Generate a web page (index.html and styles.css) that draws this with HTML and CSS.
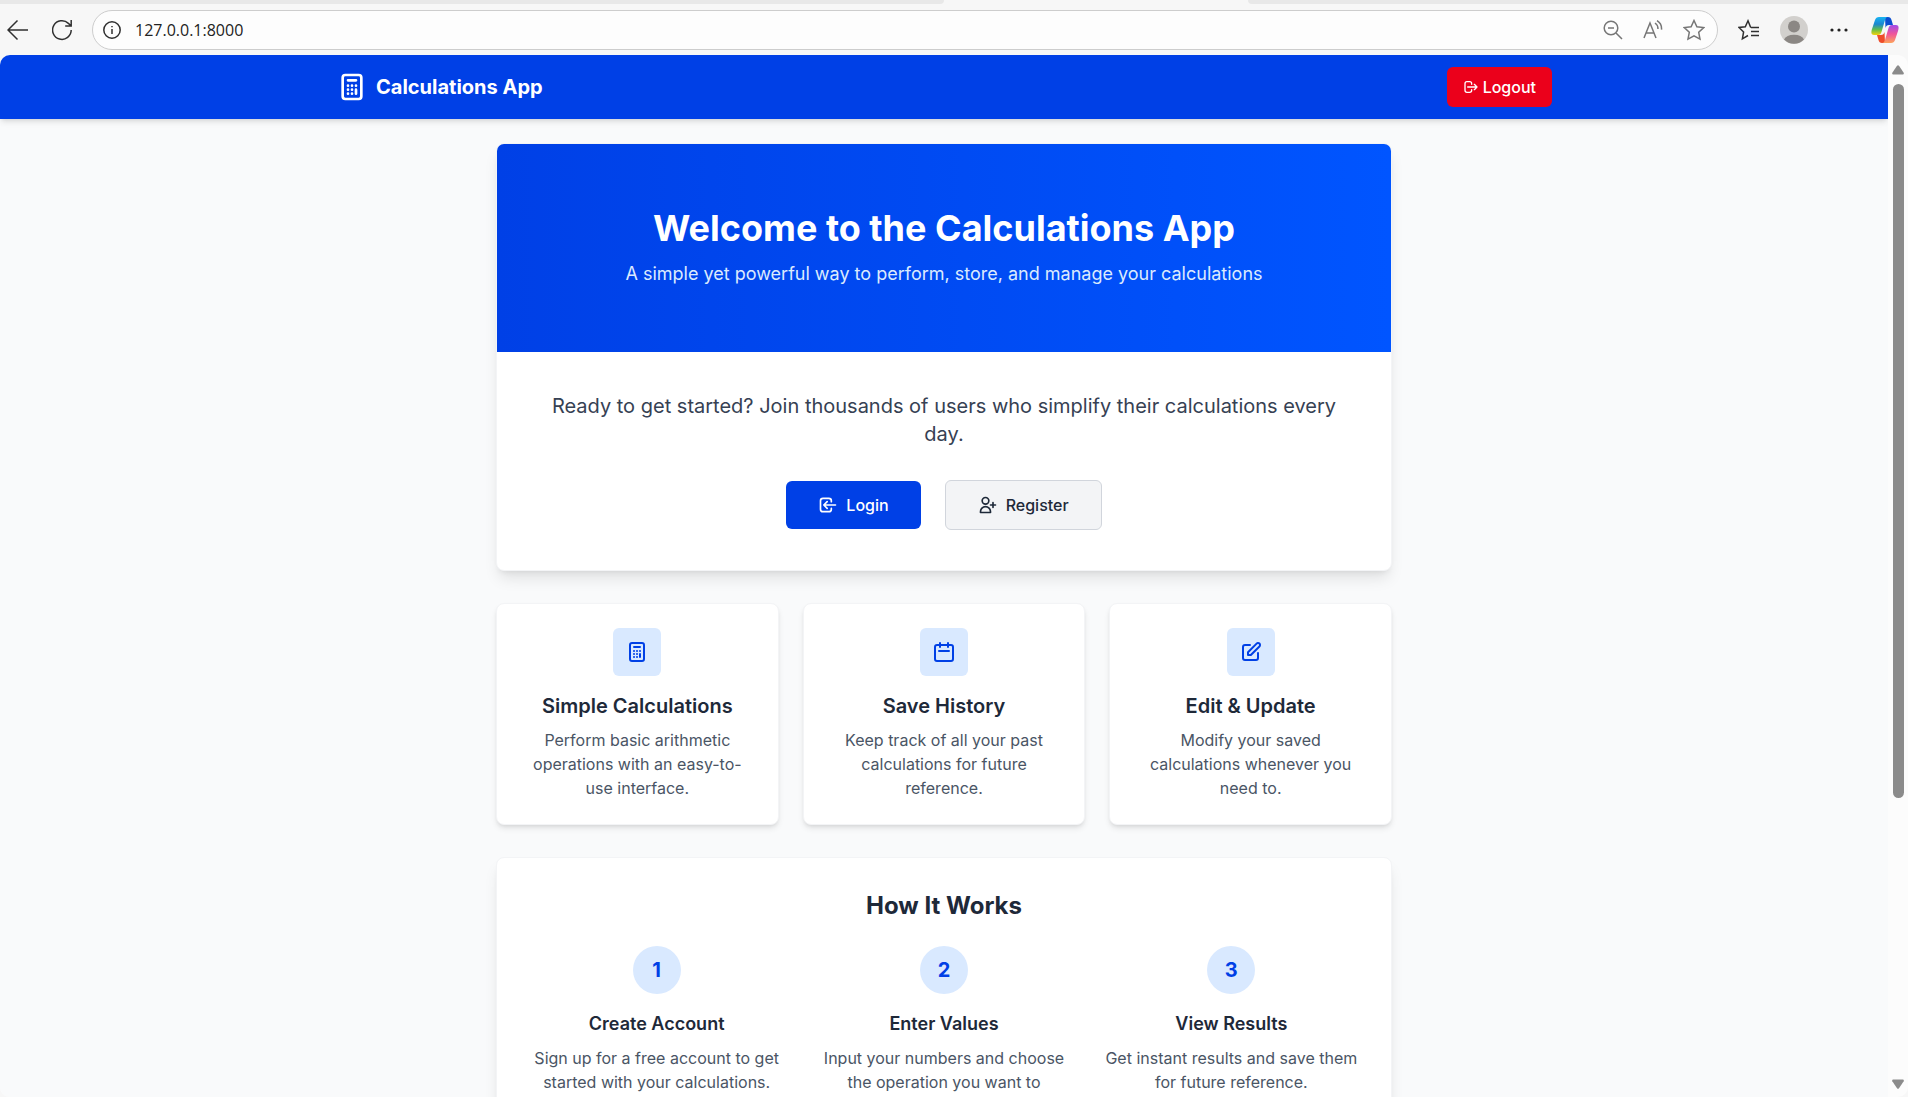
FILE: index.html
```html
<!DOCTYPE html>
<html lang="en">
<head>
<meta charset="utf-8">
<title>Calculations App</title>
<link rel="stylesheet" href="styles.css">
</head>
<body>
<svg class="sprite" aria-hidden="true">
  <symbol id="calc" viewBox="0 0 24 24"><path class="line" d="M9 7h6m0 10v-3m-3 3h.01M9 17h.01M9 14h.01M12 14h.01M15 11h.01M12 11h.01M9 11h.01M7 21h10a2 2 0 002-2V5a2 2 0 00-2-2H7a2 2 0 00-2 2v14a2 2 0 002 2z"/></symbol>
</svg>
<div class="browser">
  <div class="tabs"><span class="tab-edge left"></span><span class="active-tab"></span><span class="tab-edge right"></span></div>
  <div class="toolbar">
    <div class="nav">
      <button class="tool" aria-label="Back"><svg width="22" height="22" viewBox="0 0 22 22"><path d="M21 11H1.500M10.500 1.500L1 11l9.500 9.500"/></svg></button>
      <button class="tool" aria-label="Refresh"><svg width="20" height="22" viewBox="0 0 20 22"><path d="M19.200 11a9.300 9.300 0 1 1-2.800-6.600l2.300 2.100M19.200 1v6h-6"/></svg></button>
    </div>
    <div class="address">
      <svg width="18" height="18" viewBox="0 0 18 18"><circle cx="9" cy="9" r="8.200"/><path d="M9 8v5M9 5v1.300"/></svg>
      <input class="url" type="text" value="127.0.0.1:8000" aria-label="Address">
      <div class="address-actions">
        <svg class="soft" width="20" height="20" viewBox="0 0 20 20"><circle cx="8" cy="8" r="6.800"/><path d="M13 13l6 6M5 8h6"/></svg>
        <svg class="soft" width="20" height="20" viewBox="0 0 20 20"><path d="M1 18L7 3l6 15M3 13h8M12 3q3 2 3 6M14 .6q5 3 4.500 9"/></svg>
        <svg class="soft" width="22" height="22" viewBox="0 0 22 22"><path d="M11 1.500l2.900 6.200 6.800.9-5 4.700 1.300 6.900-6-3.300-6 3.300 1.300-6.900-5-4.700 6.800-.9z"/></svg>
      </div>
    </div>
    <button class="tool" aria-label="Favorites"><svg width="22" height="22" viewBox="0 0 22 22"><path d="M13 8h-0.500L10 1.800 7.300 7.700l-6.300.8 4.600 4.500-1.200 6.800L10 16.500M13 8.500h8M13 12.500h8M13 16.500h8"/></svg></button>
    <button class="tool" aria-label="Profile"><svg class="avatar" width="28" height="28" viewBox="0 0 28 28"><circle cx="14" cy="14" r="14" fill="#d2d0cd"/><circle cx="14" cy="10.500" r="6" fill="#8b8784"/><path fill="#8b8784" d="M4 23.500a10.500 7 0 0 1 20 0A14 14 0 0 1 4 23.500z"/></svg></button>
    <button class="tool" aria-label="More"><svg class="dots" width="22" height="18" viewBox="0 0 22 18"><circle cx="4" cy="9" r="1.600"/><circle cx="11" cy="9" r="1.600"/><circle cx="18" cy="9" r="1.600"/></svg></button>
    <button class="tool" aria-label="Copilot"><svg class="copilot" width="30" height="28" viewBox="-1 0 30 28">
      <defs>
        <linearGradient id="ga" x1="0" y1="0" x2="0" y2="1"><stop offset="0" stop-color="#18b4f2"/><stop offset=".4" stop-color="#1b86d0"/><stop offset=".7" stop-color="#63bd4b"/><stop offset="1" stop-color="#f5d20c"/></linearGradient>
        <linearGradient id="gb" x1="0" y1="0" x2="0" y2="1"><stop offset="0" stop-color="#a04be8"/><stop offset=".5" stop-color="#f0559a"/><stop offset="1" stop-color="#fda35b"/></linearGradient>
      </defs>
      <path fill="#0b4fd0" d="M14 1h3c2 0 3 1 3.500 3l1.500 5h-4c-2 0-3 1-3.500 3z"/>
      <path fill="#ee4c2b" d="M14 27h-3c-2 0-3-1-3.500-3L6 19h4c2 0 3-1 3.500-3z"/>
      <path fill="url(#ga)" d="M8 1h9c-2 0-2.500 1.500-3 3l-3.500 12c-.7 2-1.500 3-3.500 3H3c-3 0-3-3-2-6L4 4c.7-2 2-3 4-3z"/>
      <path fill="url(#gb)" d="M20 27h-9c2 0 2.500-1.500 3-3l3.500-12c.7-2 1.500-3 3.500-3h4c3 0 3 3 2 6l-3 9c-.7 2-2 3-4 3z"/>
    </svg></button>
  </div>
  <div class="window">
    <div class="page">
      <header class="site-header">
        <div class="header-inner">
          <a class="brand" href="#"><svg width="32" height="32" viewBox="0 0 24 24"><use href="#calc"/></svg>Calculations App</a>
          <button class="logout"><svg width="16" height="16" viewBox="0 0 24 24"><path class="line" d="M17 16l4-4m0 0l-4-4m4 4H7m6 4v1a3 3 0 01-3 3H6a3 3 0 01-3-3V7a3 3 0 013-3h4a3 3 0 013 3v1"/></svg>Logout</button>
        </div>
      </header>
      <main class="content">
        <section class="card hero">
          <div class="banner">
            <h1>Welcome to the Calculations App</h1>
            <p>A simple yet powerful way to perform, store, and manage your calculations</p>
          </div>
          <div class="start">
            <p>Ready to get started? Join thousands of users who simplify their calculations every day.</p>
            <div class="actions">
              <a class="btn primary" href="#"><svg width="20" height="20" viewBox="0 0 24 24"><path class="line" d="M11 16l-4-4m0 0l4-4m-4 4h14m-5 4v1a3 3 0 01-3 3H6a3 3 0 01-3-3V7a3 3 0 013-3h7a3 3 0 013 3v1"/></svg>Login</a>
              <a class="btn secondary" href="#"><svg width="20" height="20" viewBox="0 0 24 24"><path class="line" d="M18 9v3m0 0v3m0-3h3m-3 0h-3m-2-5a4 4 0 11-8 0 4 4 0 018 0zM3 20a6 6 0 0112 0v1H3v-1z"/></svg>Register</a>
            </div>
          </div>
        </section>
        <section class="features">
          <article class="card feature">
            <span class="tile"><svg width="24" height="24" viewBox="0 0 24 24"><use href="#calc"/></svg></span>
            <h2>Simple Calculations</h2>
            <p>Perform basic arithmetic operations with an easy-to-use interface.</p>
          </article>
          <article class="card feature">
            <span class="tile"><svg width="24" height="24" viewBox="0 0 24 24"><path class="line" d="M8 7V3m8 4V3m-9 8h10M5 21h14a2 2 0 002-2V7a2 2 0 00-2-2H5a2 2 0 00-2 2v12a2 2 0 002 2z"/></svg></span>
            <h2>Save History</h2>
            <p>Keep track of all your past calculations for future reference.</p>
          </article>
          <article class="card feature">
            <span class="tile"><svg width="24" height="24" viewBox="0 0 24 24"><path class="line" d="M11 5H6a2 2 0 00-2 2v11a2 2 0 002 2h11a2 2 0 002-2v-5m-1.414-9.414a2 2 0 112.828 2.828L11.828 15H9v-2.828l8.586-8.586z"/></svg></span>
            <h2>Edit &amp; Update</h2>
            <p>Modify your saved calculations whenever you need to.</p>
          </article>
        </section>
        <section class="card how">
          <h2>How It Works</h2>
          <ol class="steps">
            <li><span class="number">1</span><h3>Create Account</h3><p>Sign up for a free account to get started with your calculations.</p></li>
            <li><span class="number">2</span><h3>Enter Values</h3><p>Input your numbers and choose the operation you want to perform.</p></li>
            <li><span class="number">3</span><h3>View Results</h3><p>Get instant results and save them for future reference.</p></li>
          </ol>
        </section>
      </main>
    </div>
    <div class="scrollbar" aria-hidden="true">
      <svg width="12" height="10" viewBox="0 0 12 10"><path d="M5 .8q1-1.300 2 0l4.700 7q.6 1.700-1 1.700H1.300q-1.600 0-1-1.700z"/></svg>
      <div class="track"><div class="thumb"></div><div class="rest"></div></div>
      <svg width="12" height="10" viewBox="0 0 12 10"><path d="M5 9.200q1 1.300 2 0l4.700-7q.6-1.700-1-1.700H1.300q-1.600 0-1 1.700z"/></svg>
    </div>
  </div>
</div>
</body>
</html>
```
FILE: styles.css
```css
* { box-sizing: border-box; }
body, h1, h2, h3, p, ol { margin: 0; padding: 0; }
body {
  font-family: Inter, "Liberation Sans", sans-serif;
  font-size: 16px;
  line-height: 24px;
  color: #1e2939;
}
button, input { font: inherit; border: 0; padding: 0; background: none; }
a { color: inherit; text-decoration: none; }
svg { display: block; flex: none; }
.sprite { display: none; }
.line { fill: none; stroke: currentColor; stroke-width: 2; stroke-linecap: round; stroke-linejoin: round; }

/* Browser frame */
.browser { display: flex; flex-direction: column; height: 100vh; overflow: hidden; background: #f7f7f7; }
.tabs { flex: none; display: grid; grid-template-columns: 10fr 304px 7fr; height: 4px; }
.tab-edge { background: #e8e8e8; }
.tab-edge.left { border-bottom-right-radius: 8px; }
.tab-edge.right { border-bottom-left-radius: 8px; }
.toolbar { flex: none; display: flex; align-items: center; height: 51px; padding: 0 8px 0 7px; gap: 20px; }
.nav { display: flex; align-items: center; gap: 23px; }
.tool { display: flex; }
.toolbar svg { fill: none; stroke: #303030; stroke-width: 1.5; }
.toolbar .soft { stroke: #767676; }
.toolbar .avatar, .toolbar .copilot { stroke: none; }
.toolbar .dots { fill: #222; stroke: none; }
.address {
  flex: 1; min-width: 0; display: flex; align-items: center; gap: 14px;
  height: 40px; padding: 0 12px 0 10px;
  border: 1px solid #cdcdcd; border-radius: 20px; background: #fdfdfd;
}
.address-actions { display: flex; align-items: center; gap: 20px; }
.url { flex: 1; min-width: 0; font-family: "Open Sans", sans-serif; font-size: 16px; color: #222; }
.window { flex: 1; min-height: 0; display: flex; border-radius: 10px; overflow: hidden; background: #fcfcfc; }
.page { flex: 1; min-width: 0; overflow: hidden; background: #f9fafb; }
.scrollbar { flex: none; width: 20px; display: flex; flex-direction: column; align-items: center; gap: 9px; padding: 10px 0 8px; }
.scrollbar svg { fill: #8b8b8b; }
.track { flex: 1; display: flex; flex-direction: column; }
.thumb { flex: 21; width: 11px; border-radius: 6px; background: #8b8b8b; }
.rest { flex: 8; }

/* Site header */
.site-header { position: relative; background: #0040e6; box-shadow: 0 4px 6px -1px rgba(0,0,0,.1), 0 2px 4px -2px rgba(0,0,0,.1); }
.header-inner { display: flex; align-items: center; justify-content: space-between; max-width: 1280px; height: 64px; margin: 0 auto; padding: 0 32px; }
.brand { display: flex; align-items: center; gap: 8px; color: #fff; font-size: 20px; line-height: 28px; font-weight: 700; }
.logout { display: flex; align-items: center; gap: 4px; height: 40px; padding: 0 16px; border-radius: 6px; background: #eb001b; color: #fff; font-weight: 500; }

/* Content */
.content { display: flex; flex-direction: column; gap: 32px; max-width: 896px; margin: 0 auto; padding: 24px 0; text-align: center; }
.card { background: #fff; border: 1px solid #f3f4f6; border-radius: 8px; }
.hero, .how { box-shadow: 0 10px 15px -3px rgba(0,0,0,.1), 0 4px 6px -4px rgba(0,0,0,.1); }
.hero { overflow: hidden; }
.banner { padding: 64px 32px; background: linear-gradient(to right, #0040e6, #0055ff); color: #fff; }
.banner h1 { margin-bottom: 12px; font-size: 36px; line-height: 40px; font-weight: 700; }
.banner p { color: #dbeafe; font-size: 18px; line-height: 28px; }
.start { padding: 40px; color: #364153; font-size: 20px; line-height: 28px; }
.actions { display: flex; justify-content: center; align-items: center; gap: 24px; margin-top: 32px; }
.btn { display: flex; align-items: center; gap: 8px; padding: 12px 32px; border-radius: 6px; font-size: 16px; line-height: 24px; font-weight: 500; }
.primary { background: #0040e6; color: #fff; }
.secondary { background: #f3f4f6; border: 1px solid #d1d5dc; color: #1e2939; }
.features { display: grid; grid-template-columns: repeat(3, 1fr); gap: 24px; }
.feature { padding: 24px; box-shadow: 0 4px 6px -1px rgba(0,0,0,.1), 0 2px 4px -2px rgba(0,0,0,.1); }
.tile, .number { display: flex; align-items: center; justify-content: center; width: 48px; height: 48px; margin: 0 auto 16px; background: #d9e9ff; color: #0040e6; }
.tile { border-radius: 6px; }
.feature h2 { margin-bottom: 8px; font-size: 20px; line-height: 28px; font-weight: 600; }
.feature p, .steps p { color: #4a5565; }
.how { padding: 32px; }
.how h2 { margin-bottom: 24px; font-size: 24px; line-height: 32px; font-weight: 700; }
.steps { display: grid; grid-template-columns: repeat(3, 1fr); gap: 32px; list-style: none; }
.number { border-radius: 50%; font-size: 20px; font-weight: 700; }
.steps h3 { margin-bottom: 8px; font-size: 18px; line-height: 28px; font-weight: 600; }
```
